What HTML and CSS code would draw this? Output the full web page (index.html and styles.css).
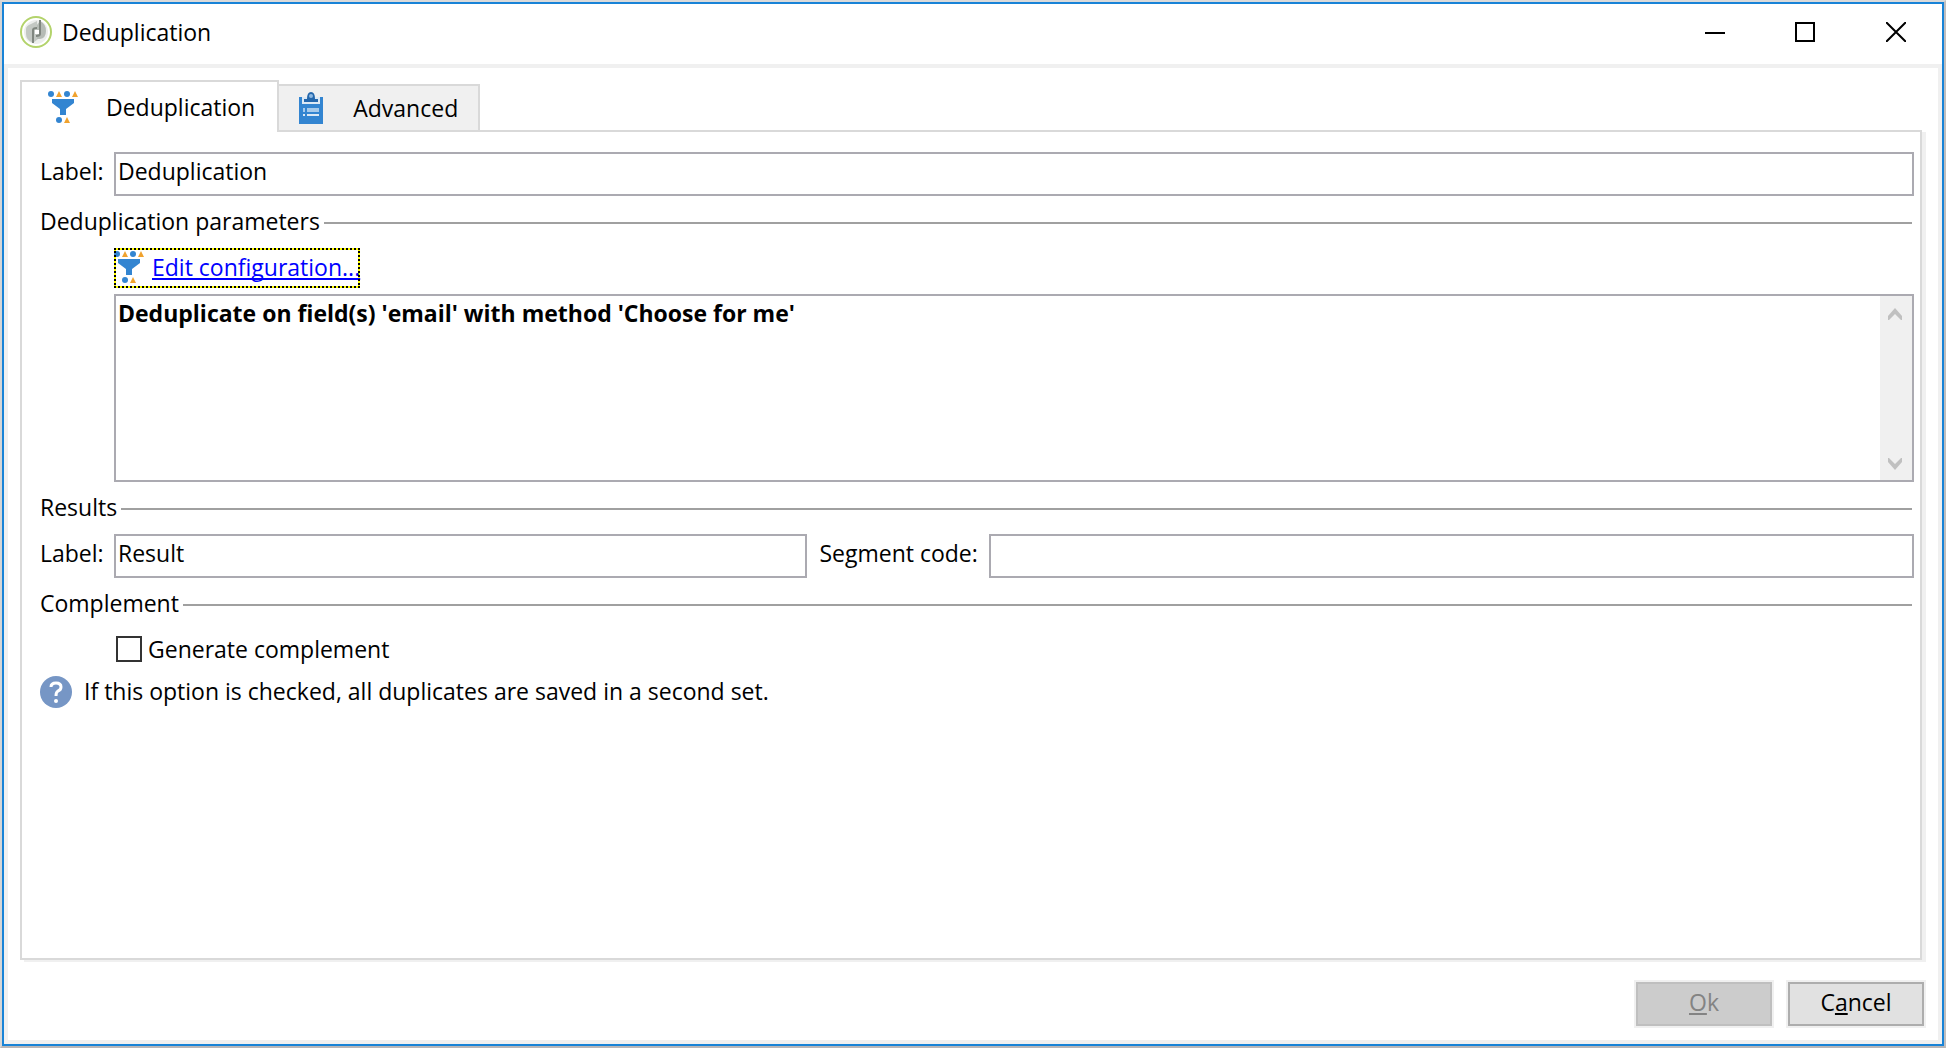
FILE: index.html
```html
<!DOCTYPE html>
<html lang="en">
<head>
<meta charset="utf-8">
<meta name="viewport" content="width=device-width, initial-scale=1">
<title>Deduplication</title>
<link rel="stylesheet" href="styles.css">
</head>
<body>
<svg class="defs" aria-hidden="true">
  <symbol id="funnel" viewBox="0 0 32 32">
    <g fill="#3385d1"><path d="M4 8h22v4l-8 6v6h-6v-6l-8-6z"/><circle cx="3" cy="3" r="3"/><circle cx="19" cy="3" r="3"/><circle cx="11" cy="29" r="3"/></g>
    <path d="M11 0l3 6H8zM27 0l3 6h-6zM19 26l3 6h-6z" fill="#f0a22e"/>
  </symbol>
</svg>
<main class="window">
  <header class="titlebar">
    <svg class="logo" viewBox="0 0 32 32" aria-hidden="true">
      <circle cx="16" cy="16" r="15" fill="#fff" stroke="#b3d36b" stroke-width="2"/>
      <circle cx="16" cy="16" r="12" fill="#eceeec"/>
      <path d="M6 13q0-3 5-5l6-3 1 18-5 4q-7-3-7-9z" fill="#c3c8c3"/>
      <path d="M20 5q6 3 6 10 0 7-6 8h-3V9z" fill="#b5bbb5"/>
      <path d="M13 27V14q0-2 4-2M20 4v14q0 2-4 2" fill="none" stroke="#7f867f" stroke-width="2"/>
      <path d="M15 14h4v4h-4z" fill="#fff"/>
    </svg>
    <h1 class="title">Deduplication</h1>
    <div class="controls">
      <button class="control" type="button" aria-label="Minimize"><svg viewBox="0 0 20 20"><path d="M0 11h20"/></svg></button>
      <button class="control" type="button" aria-label="Maximize"><svg viewBox="0 0 20 20"><path d="M1 1h18v18H1z"/></svg></button>
      <button class="control" type="button" aria-label="Close"><svg viewBox="0 0 20 20"><path d="M0 0l20 20M20 0L0 20"/></svg></button>
    </div>
  </header>
  <form class="content">
    <div class="tabs" role="tablist">
      <button class="tab tab-active" type="button" role="tab" aria-selected="true"><svg class="icon" aria-hidden="true"><use href="#funnel"/></svg>Deduplication</button>
      <button class="tab" type="button" role="tab" aria-selected="false"><svg class="icon" viewBox="0 0 32 32" aria-hidden="true">
        <path d="M0 5h24v27H0z" fill="#3385d1"/>
        <path d="M3 5h18v7H3z" fill="#dce9f5"/>
        <path d="M5 7h3q0-7 4-7t4 7h3v3H5z" fill="#2467ac"/>
        <circle cx="12" cy="4" r="2" fill="#8eb9e2"/>
        <path d="M4 16h2v4H4zM8 16h12v4H8z" fill="#a6caeb"/><path d="M4 22h2v2H4zM8 22h12v2H8z" fill="#dce9f5"/>
      </svg>Advanced</button>
    </div>
    <section class="panel" role="tabpanel">
      <div class="row">
        <label for="label">Label:</label>
        <input class="field" id="label" type="text" value="Deduplication">
      </div>
      <h2 class="heading">Deduplication parameters</h2>
      <div class="parameters">
        <a class="edit" href="#"><svg class="icon" aria-hidden="true"><use href="#funnel"/></svg><span class="edit-text">Edit configuration...</span></a>
        <div class="summary">
          <textarea class="summary-text" aria-label="Configuration summary" readonly>Deduplicate on field(s) 'email' with method 'Choose for me'</textarea>
          <div class="scrollbar" aria-hidden="true">
            <svg viewBox="0 0 14 12"><path d="M0 8l7-8 7 8v4h-1L7 6l-6 6H0z"/></svg>
            <svg viewBox="0 0 14 12"><path d="M0 4l7 8 7-8V0h-1L7 6 1 0H0z"/></svg>
          </div>
        </div>
      </div>
      <h2 class="heading">Results</h2>
      <div class="row row-results">
        <label for="result">Label:</label>
        <input class="field" id="result" type="text" value="Result">
        <label class="segment" for="segment">Segment code:</label>
        <input class="field" id="segment" type="text">
      </div>
      <h2 class="heading">Complement</h2>
      <label class="check"><input class="checkbox" type="checkbox">Generate complement</label>
      <p class="hint"><svg class="help" viewBox="0 0 32 32" aria-hidden="true"><circle cx="16" cy="16" r="16" fill="#7696c5"/><path d="M11 11q0-4 5-4t5 4q0 3-3 4-2 1-2 5" fill="none" stroke="#fff" stroke-width="3"/><circle cx="16" cy="25" r="2" fill="#fff"/></svg><span class="hint-text">If this option is checked, all duplicates are saved in a second set.</span></p>
    </section>
    <footer class="actions">
      <button class="button" type="submit" disabled><span><u>O</u>k</span></button>
      <button class="button" type="button"><span>C<u>a</u>ncel</span></button>
    </footer>
  </form>
</main>
</body>
</html>
```
FILE: styles.css
```css
* { box-sizing: border-box; }

body {
  margin: 0;
  min-height: 100vh;
  display: flex;
  border: 2px solid;
  border-color: #dadada #bfbebf #b8b6b7 #d6d6d6;
  font: 23px/26px "Open Sans", "Noto Sans", sans-serif;
  color: #000;
}

button, input, textarea { font: inherit; color: inherit; margin: 0; }

.defs { position: absolute; width: 0; height: 0; }

.window {
  flex: 1;
  min-width: 0;
  display: flex;
  flex-direction: column;
  border: 2px solid #1883d7;
  background: #fff;
}

.titlebar { display: flex; align-items: center; height: 60px; padding: 0 12px 4px 16px; }
.logo { width: 32px; height: 32px; margin-right: 10px; }
.title { flex: 1; margin: 0; font-size: 23px; font-weight: 400; }
.controls { display: flex; }
.control { width: 90px; height: 56px; padding: 0; border: 0; background: none; }
.control:last-child { width: 68px; margin-left: 12px; }
.control svg { display: block; width: 20px; height: 20px; margin: auto; fill: none; stroke: #000; stroke-width: 2; }

.content {
  flex: 1;
  display: flex;
  flex-direction: column;
  padding: 12px;
  border: 4px solid #f0f0f0;
}

.tabs { display: flex; align-items: flex-end; }
.tab {
  display: flex;
  align-items: center;
  height: 46px;
  padding: 0 20px;
  border: 2px solid #d9d9d9;
  border-width: 2px 2px 0 0;
  background: #f0f0f0;
}
.tab-active {
  position: relative;
  height: 52px;
  margin-bottom: -2px;
  padding: 0 22px 0 26px;
  border-left-width: 2px;
  background: #fff;
}
.icon { width: 32px; height: 32px; flex: none; }
.tab .icon { margin-right: 22px; }
.tab-active .icon { margin-right: 26px; }

.panel {
  flex: 1;
  display: flex;
  flex-direction: column;
  gap: 12px;
  margin: 0 4px 2px 0;
  padding: 20px 6px 20px 18px;
  border: 2px solid #d9d9d9;
  box-shadow: 4px 2px #f0f0f0;
}

.row { display: grid; grid-template-columns: 74px 1fr; }
.row-results { grid-template-columns: 74px 3fr 182px 4fr; }
.row label { padding-top: 6px; }
.row .segment { padding-left: 12px; }
.field {
  width: 100%;
  min-width: 0;
  height: 44px;
  padding: 0 4px 6px 2px;
  border: 2px solid #abaab1;
  border-radius: 0;
  background: #fff;
}

.heading { display: flex; align-items: center; gap: 4px; margin: 0; padding: 0 2px 2px 0; font-size: 23px; font-weight: 400; }
.heading::after { content: ""; flex: 1; height: 2px; margin-top: 4px; background: #a0a0a0; }

.parameters { display: flex; flex-direction: column; align-items: flex-start; gap: 6px; padding-left: 74px; }
.edit {
  display: flex;
  align-items: center;
  gap: 6px;
  height: 40px;
  outline: 2px dotted #000;
  outline-offset: -2px;
  box-shadow: inset 0 0 0 2px #ff0;
  color: #00f;
  text-decoration-thickness: 2px;
  text-underline-offset: 2px;
  text-decoration-skip-ink: none;
}
.edit .icon { margin-bottom: 2px; }
.edit-text { padding-bottom: 2px; }
.summary { display: flex; align-self: stretch; height: 188px; border: 2px solid #abaab1; }
.summary-text {
  flex: 1;
  min-width: 0;
  padding: 4px 2px;
  border: 0;
  resize: none;
  overflow: hidden;
  font-weight: 700;
  background: #fff;
}
.scrollbar { display: flex; flex-direction: column; justify-content: space-between; width: 32px; padding: 12px 10px 10px 8px; background: #f0f0f0; }
.scrollbar svg { width: 14px; height: 12px; fill: #c0c0c0; }

.check { display: flex; align-items: center; align-self: flex-start; gap: 6px; padding: 6px 0 2px 76px; }
.checkbox { appearance: none; width: 26px; height: 26px; border: 2px solid #333; background: #fff; }
.hint { display: flex; align-items: center; gap: 12px; margin: 0; }
.hint-text { padding-bottom: 2px; }
.help { width: 32px; height: 32px; flex: none; }

.actions { display: flex; justify-content: flex-end; gap: 12px; padding-top: 18px; }
.button {
  width: 140px;
  height: 48px;
  padding: 0 0 4px;
  border: 2px solid #f0f0f0;
  background: #e1e1e1;
  box-shadow: inset 0 0 0 2px #adadad;
}
.button:disabled { background: #ccc; color: #838383; box-shadow: inset 0 0 0 2px #bfbfbf; }
.button u { text-decoration-thickness: 2px; text-underline-offset: 2px; text-decoration-skip-ink: none; }
```
